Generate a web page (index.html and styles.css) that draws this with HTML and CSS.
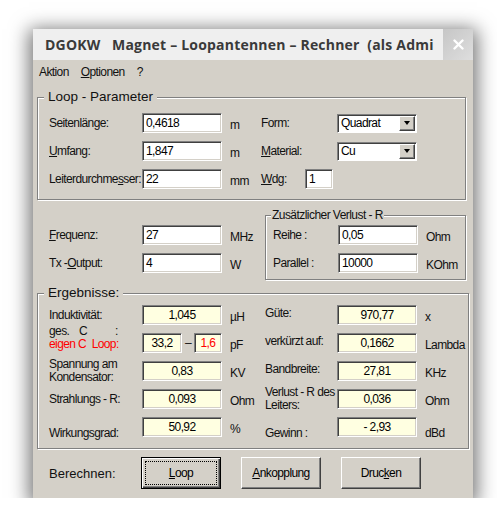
FILE: index.html
```html
<!DOCTYPE html>
<html>
<head>
<meta charset="utf-8">
<link rel="stylesheet" href="styles.css">
</head>
<body>
<div class="window">
  <div class="titlebar">
    <div class="title">DGOKW&nbsp;&nbsp; Magnet – Loopantennen – Rechner&nbsp; (als Admi</div>
    <div class="close"><svg width="11" height="11" viewBox="0 0 11 11"><path d="M1.5 1.5 L9.5 9.5 M9.5 1.5 L1.5 9.5" stroke="#fff" stroke-width="2.4" stroke-linecap="round"/></svg></div>
  </div>
  <div class="menubar">
    <span>Aktion</span><span><u>O</u>ptionen</span><span>?</span>
  </div>

  <fieldset class="group loop">
    <legend>Loop - Parameter</legend>
    <div class="grid loop-grid">
      <span class="lbl">Seitenlänge:</span><div class="edit">0,4618</div><span class="unit">m</span>
      <span class="lbl">Form:</span><div class="combo"><span class="ctext">Quadrat</span><span class="cbtn"><i class="tri"></i></span></div>

      <span class="lbl"><u>U</u>mfang:</span><div class="edit">1,847</div><span class="unit">m</span>
      <span class="lbl"><u>M</u>aterial:</span><div class="combo"><span class="ctext">Cu</span><span class="cbtn"><i class="tri"></i></span></div>

      <span class="lbl">Leiterdurchme<u>s</u>ser:</span><div class="edit">22</div><span class="unit">mm</span>
      <div class="wdg"><span class="lbl wdg-l"><u>W</u>dg:</span><div class="edit small">1</div></div>
    </div>
  </fieldset>

  <div class="mid">
    <div class="mid-left">
      <div class="grid mid-grid">
        <span class="lbl"><u>F</u>requenz:</span><div class="edit">27</div><span class="unit">MHz</span>
        <span class="lbl">Tx -<u>O</u>utput:</span><div class="edit">4</div><span class="unit">W</span>
      </div>
    </div>
    <fieldset class="group extra">
      <legend>Zusätzlicher Verlust - R</legend>
      <div class="grid extra-grid">
        <span class="lbl">Reihe :</span><div class="edit">0,05</div><span class="unit">Ohm</span>
        <span class="lbl">Parallel :</span><div class="edit">10000</div><span class="unit">KOhm</span>
      </div>
    </fieldset>
  </div>

  <fieldset class="group results">
    <legend>Ergebnisse:</legend>
    <div class="grid res-grid">
      <span class="lbl">Induktivität:</span><div class="edit res">1,045</div><span class="unit">µH</span>
      <span class="lbl up">Güte:</span><div class="edit res">970,77</div><span class="unit">x</span>

      <span class="lbl two gesc"><span class="gline"><span class="g1">ges.</span><span class="g2">C</span><span>:</span></span><span class="red">eigen C&nbsp; Loop:</span></span>
      <div class="pair"><div class="edit res p1">33,2</div><span class="dash">–</span><div class="edit res p2 red">1,6</div></div><span class="unit">pF</span>
      <span class="lbl up">verkürzt auf:</span><div class="edit res">0,1662</div><span class="unit">Lambda</span>

      <span class="lbl two"><span>Spannung am</span><span>Kondensator:</span></span><div class="edit res">0,83</div><span class="unit">KV</span>
      <span class="lbl up">Bandbreite:</span><div class="edit res">27,81</div><span class="unit">KHz</span>

      <span class="lbl">Strahlungs - R:</span><div class="edit res">0,093</div><span class="unit">Ohm</span>
      <span class="lbl two"><span>Verlust - R des</span><span>Leiters:</span></span><div class="edit res">0,036</div><span class="unit">Ohm</span>

      <span class="lbl low">Wirkungsgrad:</span><div class="edit res">50,92</div><span class="unit">%</span>
      <span class="lbl low">Gewinn :</span><div class="edit res">- 2,93</div><span class="unit low">dBd</span>
    </div>
  </fieldset>

  <div class="actions">
    <span class="act-lbl">Berechnen:</span>
    <div class="btn default"><span class="focus"><u>L</u>oop</span></div>
    <div class="btn"><span><u>A</u>nkopplung</span></div>
    <div class="btn"><span>Druc<u>k</u>en</span></div>
  </div>
</div>
</body>
</html>
```

FILE: styles.css
```css
html, body {
  margin: 0;
  background: #fff;
}
body {
  font-family: "Liberation Sans", Arial, sans-serif;
  font-size: 12px;
  letter-spacing: -0.6px;
  color: #111;
  overflow: hidden;
}
u { text-underline-offset: 1px; }

.window {
  width: 440px;
  height: 469px;
  margin: 29px 0 0 33px;
  background: #d4d0c8;
  box-shadow: 0 4px 18px 4px rgba(0, 0, 0, 0.55);
  display: flex;
  flex-direction: column;
}

.titlebar {
  height: 31px;
  display: flex;
  background: #efefef;
}
.title {
  flex: 1;
  padding-left: 12px;
  font: 700 14px "Open Sans", "Liberation Sans", sans-serif;
  letter-spacing: 0.2px;
  line-height: 31px;
  color: #3a3a3a;
  white-space: nowrap;
  overflow: hidden;
}
.close {
  width: 30px;
  background: linear-gradient(135deg, #c6c6c6, #dedede);
  display: flex;
  align-items: center;
  justify-content: center;
}

.menubar {
  height: 24px;
  display: flex;
  align-items: center;
  gap: 12px;
  padding-left: 6px;
}

fieldset.group {
  box-sizing: border-box;
  min-width: 0;
  margin: 0;
  border: 1px solid #808080;
  box-shadow: 1px 1px 0 #fff, inset 1px 1px 0 #fff;
}
fieldset.group legend {
  background: #d4d0c8;
  font: 13.5px "Liberation Sans", Arial, sans-serif;
  letter-spacing: 0;
  line-height: 16px;
  padding: 0 4px;
  margin-left: -5px;
}

.loop {
  width: 429px;
  margin: 5px 0 0 4px !important;
  padding: 8px 0 10px 11px;
}

.grid {
  display: grid;
  grid-auto-rows: 20px;
  row-gap: 8px;
  align-items: center;
}
.loop-grid { grid-template-columns: 93px 80px 39px 76px 80px; }
.mid-grid { grid-template-columns: 93px 80px auto; }
.extra-grid { grid-template-columns: 65px 80px auto; }
.res-grid { grid-template-columns: 93px 80px 43px 72px 80px auto; }

.lbl { white-space: nowrap; padding-bottom: 1px; }
.unit { padding-left: 8px; padding-top: 3px; white-space: nowrap; }

.edit {
  box-sizing: border-box;
  height: 20px;
  border: 1px solid;
  border-color: #808080 #fff #fff #808080;
  box-shadow: inset 1px 1px 0 #404040, inset -1px -1px 0 #d4d0c8;
  background: #fff;
  padding: 0 3px;
  line-height: 18px;
  white-space: nowrap;
  color: #000;
}
.edit.res {
  background: #ffffe1;
  text-align: center;
}
.red { color: #f00 !important; }

.combo {
  box-sizing: border-box;
  height: 19px;
  display: flex;
  border: 1px solid;
  border-color: #808080 #fff #fff #808080;
  box-shadow: inset 1px 1px 0 #404040;
  background: #fff;
  padding: 1px;
}
.ctext { flex: 1; padding-left: 2px; line-height: 15px; color: #000; }
.cbtn {
  box-sizing: border-box;
  width: 16px;
  background: #d4d0c8;
  border: 1px solid;
  border-color: #fff #404040 #404040 #fff;
  box-shadow: inset -1px -1px 0 #808080;
  display: flex;
  align-items: center;
  justify-content: center;
}
.tri {
  width: 0;
  height: 0;
  border-left: 3.5px solid transparent;
  border-right: 3.5px solid transparent;
  border-top: 4px solid #000;
}

.wdg {
  grid-column: 4 / span 2;
  display: flex;
  align-items: center;
}
.wdg-l { width: 44px; }
.edit.small { width: 28px; }

.mid {
  display: flex;
  margin-top: 8px;
}
.mid-left {
  width: 232px;
  box-sizing: border-box;
  padding: 17px 0 0 16px;
}
.extra {
  width: 201px;
  padding: 2px 0 6px 7px;
}
.extra legend {
  font: 12px "Liberation Sans", Arial, sans-serif !important;
  letter-spacing: -0.55px !important;
  line-height: 15px !important;
  padding: 0 1px !important;
  margin-left: -2px !important;
}

.results {
  width: 432px;
  margin: 5px 0 0 4px !important;
  padding: 4px 0 11px 11px;
}
.two {
  display: flex;
  flex-direction: column;
  line-height: 13px;
  padding-bottom: 0;
}
.gesc { align-self: start; margin-top: -8px; }
.gline { display: flex; }
.g1 { width: 30px; }
.g2 { width: 36px; }
.up { padding-bottom: 4px; }
.low { align-self: end; padding-bottom: 0; margin-bottom: -3px; }

.pair { display: flex; align-items: center; }
.p1 { width: 40px; }
.p2 { width: 28px; }
.dash { width: 12px; text-align: center; }

.actions {
  display: flex;
  align-items: center;
  margin-top: 8px;
  padding-left: 16px;
  gap: 20px;
}
.act-lbl {
  width: 72px;
  font: 13px "Liberation Sans", Arial, sans-serif;
  letter-spacing: 0;
}
.btn {
  box-sizing: border-box;
  width: 80px;
  height: 32px;
  border: 1px solid;
  border-color: #fff #404040 #404040 #fff;
  box-shadow: inset -1px -1px 0 #808080;
  background: #d4d0c8;
  display: flex;
  align-items: center;
  justify-content: center;
  color: #000;
}
.btn.default {
  border-color: #000;
  box-shadow: inset 1px 1px 0 #fff, inset -1px -1px 0 #404040, inset -2px -2px 0 #808080;
  padding: 4px;
}
.btn .focus {
  flex: 1;
  align-self: stretch;
  display: flex;
  align-items: center;
  justify-content: center;
  outline: 1px dotted #000;
}
```
